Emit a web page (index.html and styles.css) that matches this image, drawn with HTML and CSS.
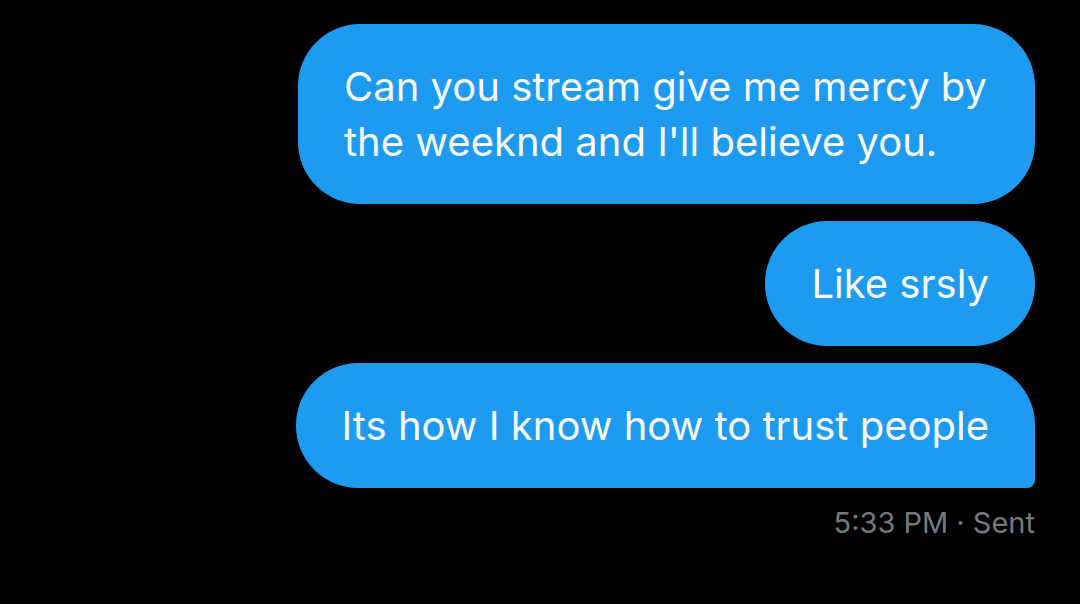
FILE: index.html
```html
<!DOCTYPE html>
<html lang="en">

<head>
    <meta charset="UTF-8" />
    <meta name="viewport" content="width=device-width, initial-scale=1.0" />
    <title>Messages</title>
    <link rel="stylesheet" href="styles.css">
</head>

<body>
    <div class="thread">
        <div class="bubble narrow">Can you stream give me mercy by the weeknd and I'll believe you.</div>
        <div class="bubble">Like srsly</div>
        <div class="bubble last">Its how I know how to trust people</div>
        <p class="meta">5:33 PM · Sent</p>
    </div>
</body>

</html>
```
FILE: styles.css
```css
body {
    margin: 0;
    background: #000;
    font-family: Inter, "Noto Sans", sans-serif;
    height: 100vh;
}

.thread {
    display: flex;
    flex-direction: column;
    align-items: flex-end;
    gap: 17px;
    padding: 24px 45px 0 0;
}

.bubble {
    background: #1d9bf0;
    color: #f7f9f9;
    font-size: 40px;
    line-height: 55px;
    padding: 35px 46px;
    border-radius: 62px;
    max-width: 665px;
}

.narrow {
    max-width: 645px;
}

.last {
    border-bottom-right-radius: 8px;
}

.meta {
    margin: 0;
    color: #767a7f;
    font-size: 29px;
    line-height: 36px;
}
```
